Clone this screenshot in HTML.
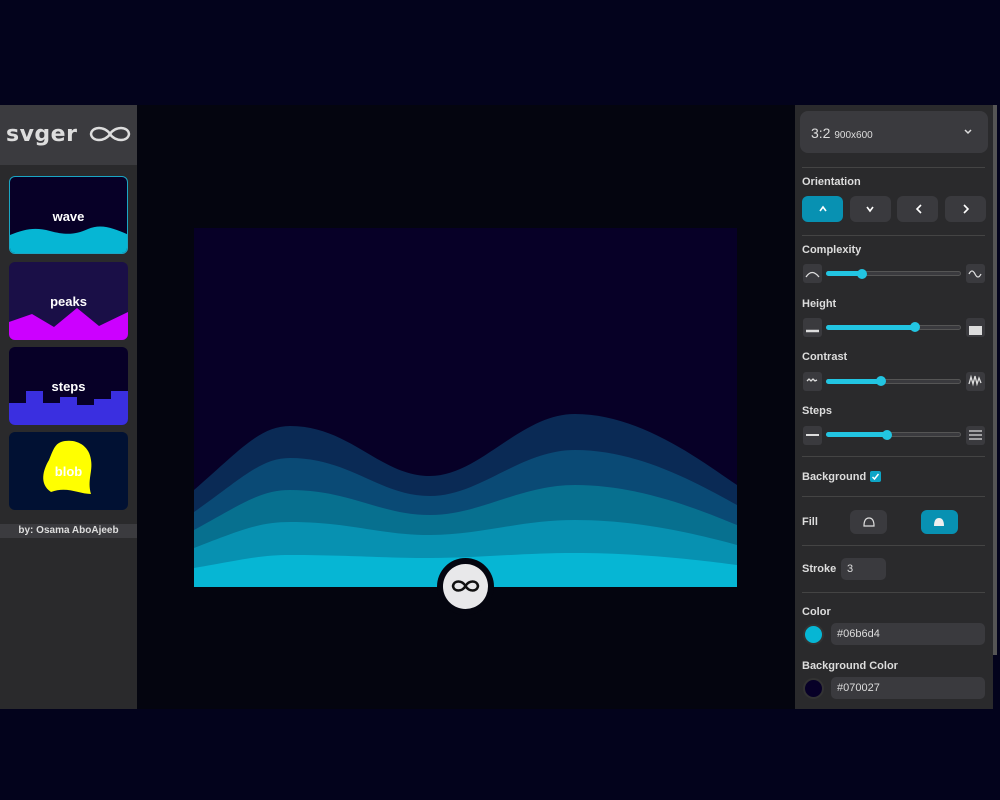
<!DOCTYPE html>
<html><head><meta charset="utf-8"><style>
*{box-sizing:border-box;margin:0;padding:0}
body{width:1000px;height:800px;background:#03031c;font-family:"Liberation Sans",sans-serif;position:relative;overflow:hidden;color:#e6e6e6}
.abs{position:absolute}
#left{left:0;top:105px;width:137px;height:604px;background:#2a2a2c}
#logo{left:0;top:105px;width:137px;height:60px;background:#3b3b3f}
#center{left:137px;top:105px;width:658px;height:604px;background:#04050f}
#right{left:795px;top:105px;width:198px;height:604px;background:#2a2a2c}
.card{position:absolute;left:9px;width:119px;height:78px;border-radius:6px;overflow:hidden}
.card span{position:absolute;width:100%;text-align:center;top:32px;font-weight:bold;font-size:13px;color:#fff}
.lbl{position:absolute;left:802px;font-size:11px;font-weight:bold;color:#ddd}
.hr{position:absolute;left:802px;width:183px;height:1px;background:#444}
.btn{position:absolute;top:196px;width:41px;height:26px;border-radius:6px;background:#3a3a3e}
.ic{position:absolute;width:19px;height:19px;border-radius:3px;background:#3a3a3e}
.track{position:absolute;left:826px;width:135px;height:5px;border-radius:3px;background:#3a3a3e;border:1px solid #555}
.fill{position:absolute;left:826px;height:5px;border-radius:3px;background:#22c5e2}
.knob{position:absolute;width:10px;height:10px;border-radius:50%;background:#22c5e2}
.inp{position:absolute;height:22px;border-radius:5px;background:#3a3a3e;font-size:11px;color:#ddd;padding:5px 6px}
</style></head><body>
<div id="left" class="abs"></div>
<div id="logo" class="abs"><div style="position:absolute;left:6px;top:17px;font-family:'DejaVu Sans',sans-serif;font-size:22px;font-weight:bold;color:#ddd;letter-spacing:0.5px">svger</div></div>
<svg class="abs" style="left:88px;top:123px" width="44" height="22" viewBox="0 0 44 22"><path d="M22 11C17 3 4 3 3 11C4 19 17 19 22 11C27 3 40 3 41 11C40 19 27 19 22 11Z" fill="none" stroke="#ddd" stroke-width="2.5"/></svg>
<div class="card" style="top:176px;background:#070027;border:1px solid #1aa6c4"><span>wave</span>
<svg class="abs" style="left:0;top:0" width="119" height="78"><path d="M0 58C15 52 25 50 40 54C55 58 65 58 78 52C92 46 105 52 119 58V78H0Z" fill="#06b6d4"/></svg></div>
<div class="card" style="top:262px;background:#1a0f47"><span>peaks</span>
<svg class="abs" style="left:0;top:0" width="119" height="78"><path d="M0 60L23 52L45 65L68 46L90 64L119 50V78H0Z" fill="#cc00ff"/></svg></div>
<div class="card" style="top:347px;background:#070027"><span>steps</span>
<svg class="abs" style="left:0;top:0" width="119" height="78"><path d="M0 56H17V44H34V56H51V50H68V58H85V52H102V44H119V78H0Z" fill="#3a2fe0"/></svg></div>
<div class="card" style="top:432px;background:#011133">
<svg class="abs" style="left:0;top:0" width="119" height="78"><path d="M52 10C65 6 80 12 82 28C84 40 78 48 82 62C70 62 58 54 42 60C30 52 34 38 40 28C44 18 46 12 52 10Z" fill="#ffff00"/></svg><span>blob</span></div>
<div class="abs" style="left:0;top:524px;width:137px;height:14px;background:#3b3b3f;font-size:10px;font-weight:bold;text-align:center;line-height:14px;color:#ddd">by: Osama AboAjeeb</div>
<div id="center" class="abs"></div>
<svg class="abs" style="left:194px;top:228px" width="543" height="359" viewBox="194 228 543 359">
<rect x="194" y="228" width="543" height="359" fill="#070027"/>
<path d="M194 490C240 450 260 426 290 426C350 426 380 476 430 476C480 476 520 414 575 414C640 414 700 460 737 485V587H194Z" fill="#0a2a55"/>
<path d="M194 512C240 480 260 458 290 458C350 458 380 496 430 496C480 496 520 450 575 450C640 450 700 485 737 505V587H194Z" fill="#0a4a75"/>
<path d="M194 530C240 505 260 490 290 490C350 490 380 515 430 515C480 515 520 485 575 485C640 485 700 510 737 525V587H194Z" fill="#07708f"/>
<path d="M194 548C240 530 260 522 290 522C350 522 380 535 430 535C480 535 520 520 575 520C640 520 700 535 737 545V587H194Z" fill="#0791b1"/>
<path d="M194 568C240 560 260 555 290 555C350 555 380 558 430 558C480 558 520 553 575 553C640 553 700 560 737 565V587H194Z" fill="#06b6d4"/>
</svg>
<div class="abs" style="left:437px;top:558px;width:57px;height:57px;border-radius:50%;background:#04050f"></div>
<div class="abs" style="left:443px;top:564px;width:45px;height:45px;border-radius:50%;background:#e8e8ea"></div>
<svg class="abs" style="left:450px;top:577px" width="31" height="18" viewBox="0 0 31 18"><path d="M15.5 9C12 3 4 3 3 9C4 15 12 15 15.5 9C19 3 27 3 28 9C27 15 19 15 15.5 9Z" fill="none" stroke="#111" stroke-width="2.5"/></svg>
<div id="right" class="abs"></div>
<div class="abs" style="left:993px;top:105px;width:4px;height:550px;background:#555"></div>
<div class="abs" style="left:800px;top:111px;width:188px;height:42px;border-radius:8px;background:#3a3a3e"></div>
<div class="abs" style="left:811px;top:125px;font-size:14px;color:#ddd">3:2 <span style="font-size:10px">900x600</span></div>
<svg class="abs" style="left:963px;top:128px" width="10" height="8"><path d="M2 2L5 5L8 2" stroke="#ddd" stroke-width="1.5" fill="none"/></svg>
<div class="hr" style="top:167px"></div>
<div class="lbl" style="top:176px">Orientation</div>
<div class="btn" style="left:802px;background:#0891b2"></div>
<div class="btn" style="left:850px"></div><div class="btn" style="left:897px"></div><div class="btn" style="left:945px"></div>
<svg class="abs" style="left:802px;top:196px" width="184" height="26"><g stroke="#fff" stroke-width="1.6" fill="none"><path d="M18 15L21 11L24 15"/><path d="M65 11L68 15L71 11"/><path d="M119 9L115 13L119 17"/><path d="M162 9L166 13L162 17"/></g></svg>
<div class="hr" style="top:235px"></div>
<div class="lbl" style="top:244px">Complexity</div>
<div class="lbl" style="top:298px">Height</div>
<div class="lbl" style="top:351px">Contrast</div>
<div class="lbl" style="top:405px">Steps</div>
<div class="ic" style="left:803px;top:264px"></div><div class="ic" style="left:966px;top:264px"></div>
<div class="ic" style="left:803px;top:318px"></div><div class="ic" style="left:966px;top:318px"></div>
<div class="ic" style="left:803px;top:372px"></div><div class="ic" style="left:966px;top:372px"></div>
<div class="ic" style="left:803px;top:426px"></div><div class="ic" style="left:966px;top:426px"></div>
<svg class="abs" style="left:803px;top:264px" width="183" height="182"><g stroke="#ddd" stroke-width="1.3" fill="none">
<path d="M3 13Q9 4 16 13"/><path d="M166 10Q169 4 172 10T178 10"/>
<path d="M3 67H16" stroke-width="2.5"/><rect x="166" y="62" width="13" height="9" fill="#ddd" stroke="none"/>
<path d="M4 117L6 115L8 117L10 115L12 117L14 116"/><path d="M166 120L168 113L170 120L172 112L174 120L176 114L178 119"/>
<path d="M3 171H16" stroke-width="2"/><path d="M166 167H179M166 171H179M166 175H179"/></g></svg>
<div class="track" style="top:271px"></div><div class="fill" style="top:271px;width:36px"></div><div class="knob" style="left:857px;top:269px"></div>
<div class="track" style="top:325px"></div><div class="fill" style="top:325px;width:89px"></div><div class="knob" style="left:910px;top:322px"></div>
<div class="track" style="top:379px"></div><div class="fill" style="top:379px;width:55px"></div><div class="knob" style="left:876px;top:376px"></div>
<div class="track" style="top:432px"></div><div class="fill" style="top:432px;width:61px"></div><div class="knob" style="left:882px;top:430px"></div>
<div class="hr" style="top:456px"></div>
<div class="lbl" style="top:471px">Background</div>
<div class="abs" style="left:870px;top:471px;width:11px;height:11px;border-radius:2px;background:#0ea5c6"></div>
<svg class="abs" style="left:870px;top:471px" width="11" height="11"><path d="M2.5 6L4.5 8L8.5 3" stroke="#fff" stroke-width="1.5" fill="none"/></svg>
<div class="hr" style="top:496px"></div>
<div class="lbl" style="top:516px">Fill</div>
<div class="abs" style="left:850px;top:510px;width:37px;height:24px;border-radius:6px;background:#3a3a3e"></div>
<div class="abs" style="left:921px;top:510px;width:37px;height:24px;border-radius:6px;background:#0891b2"></div>
<svg class="abs" style="left:850px;top:510px" width="110" height="24"><path d="M14 16Q14 8 19 8Q24 8 24 16Z" fill="none" stroke="#ddd" stroke-width="1.2"/><path d="M84 16Q84 8 89 8Q94 8 94 16Z" fill="#eee"/></svg>
<div class="hr" style="top:545px"></div>
<div class="lbl" style="top:563px">Stroke</div>
<div class="inp" style="left:841px;top:558px;width:45px">3</div>
<div class="hr" style="top:592px"></div>
<div class="lbl" style="top:606px">Color</div>
<div class="abs" style="left:803px;top:624px;width:21px;height:21px;border-radius:50%;background:#06b6d4;border:2px solid #333"></div>
<div class="inp" style="left:831px;top:623px;width:154px">#06b6d4</div>
<div class="lbl" style="top:660px">Background Color</div>
<div class="abs" style="left:803px;top:678px;width:21px;height:21px;border-radius:50%;background:#070027;border:2px solid #333"></div>
<div class="inp" style="left:831px;top:677px;width:154px">#070027</div>
</body></html>
